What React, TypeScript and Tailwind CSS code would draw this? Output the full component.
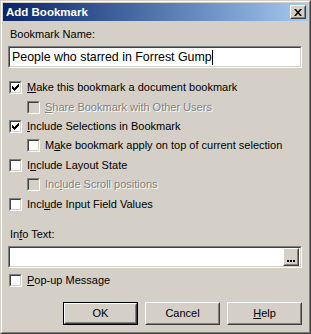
import type { ReactNode } from 'react';

const raisedOuter = "border border-t-white border-l-white border-r-[#404040] border-b-[#404040]";
const raisedInner = "border border-t-[#d4d0c8] border-l-[#d4d0c8] border-r-[#808080] border-b-[#808080]";
const sunkenOuter = "border border-t-[#808080] border-l-[#808080] border-r-white border-b-white";
const sunkenInner = "border border-t-[#404040] border-l-[#404040] border-r-[#d4d0c8] border-b-[#d4d0c8]";

function CheckBox({ checked, disabled }: { checked?: boolean; disabled?: boolean }) {
    return (
        <div className={`${sunkenOuter} w-[13px] h-[13px] shrink-0`}>
            <div className={`${sunkenInner} w-full h-full flex items-center justify-center ${disabled ? 'bg-[#d4d0c8]' : 'bg-white'}`}>
                {checked && (
                    <svg width="7" height="7" viewBox="0 0 7 7">
                        <path d="M0 2h1v1h1v1h1v-1h1v-1h1v-1h1v-1h1v3h-1v1h-1v1h-1v1h-1v1h-1v-1h-1v-1h-1z" fill="#000" />
                    </svg>
                )}
            </div>
        </div>
    );
}

function Row({ checked, disabled, indent, children }: { checked?: boolean; disabled?: boolean; indent?: boolean; children: ReactNode }) {
    return (
        <div className={`flex items-center h-[19.4px] gap-[5px] ${indent ? 'ml-[19px]' : 'ml-px'}`}>
            <CheckBox checked={checked} disabled={disabled} />
            <span className={disabled ? 'text-[#808080] [text-shadow:1px_1px_0_#fff]' : 'text-black'}>{children}</span>
        </div>
    );
}

function Button({ children, isDefault }: { children: ReactNode; isDefault?: boolean }) {
    return (
        <div className={`w-[75px] h-[23px] ${isDefault ? 'border border-black' : ''}`}>
            <div className={`${raisedOuter} w-full h-full`}>
                <div className={`${raisedInner} w-full h-full flex items-center justify-center bg-[#d4d0c8]`}>
                    {children}
                </div>
            </div>
        </div>
    );
}

export default function App() {
    return (
        <div className="w-[311px] h-[334px] font-['Liberation_Sans',Arial,sans-serif] text-[11px] leading-[13px] text-black">
            <div className="w-full h-full border border-t-[#d4d0c8] border-l-[#d4d0c8] border-r-[#404040] border-b-[#404040]">
                <div className="w-full h-full border border-t-white border-l-white border-r-[#808080] border-b-[#808080] bg-[#d4d0c8] p-px flex flex-col">
                    {/* title bar */}
                    <div className="h-[18px] flex items-center justify-between pl-[3px] pr-[2px] bg-gradient-to-r from-[#0a246a] to-[#a6caf0]">
                        <span className="text-white font-bold text-[11.5px]">Add Bookmark</span>
                        <div className={`${raisedOuter} w-[16px] h-[14px]`}>
                            <div className={`${raisedInner} w-full h-full bg-[#d4d0c8] flex items-center justify-center`}>
                                <svg width="8" height="7" viewBox="0 0 8 7">
                                    <path d="M0 0h2l2 2.5 2-2.5h2l-3 3.5 3 3.5h-2l-2-2.5-2 2.5h-2l3-3.5z" fill="#000" />
                                </svg>
                            </div>
                        </div>
                    </div>

                    <div className="flex flex-col pl-[5px] pr-[6px]">
                        <div className="mt-[7px] ml-[2px]">Bookmark Name:</div>
                        <div className={`${sunkenOuter} mt-[5px] h-[22px]`}>
                            <div className={`${sunkenInner} w-full h-full bg-white flex items-center pl-[2px] text-[12.4px]`}>
                                <span>People who starred in Forrest Gump</span>
                                <span className="w-px h-[15px] bg-black"></span>
                            </div>
                        </div>

                        <div className="flex flex-col mt-[10px]">
                            <Row checked><u>M</u>ake this bookmark a document bookmark</Row>
                            <Row indent disabled><u>S</u>hare Bookmark with Other Users</Row>
                            <Row checked><u>I</u>nclude Selections in Bookmark</Row>
                            <Row indent>M<u>a</u>ke bookmark apply on top of current selection</Row>
                            <Row>I<u>n</u>clude Layout State</Row>
                            <Row indent disabled>Inc<u>l</u>ude Scroll positions</Row>
                            <Row>Incl<u>u</u>de Input Field Values</Row>
                        </div>

                        <div className="mt-[14px] ml-[2px]">In<u>f</u>o Text:</div>
                        <div className={`${sunkenOuter} mt-[5px] h-[22px]`}>
                            <div className={`${sunkenInner} w-full h-full bg-white flex items-center justify-end pr-px`}>
                                <div className={`${raisedOuter} w-[16px] h-[18px]`}>
                                    <div className={`${raisedInner} w-full h-full bg-[#d4d0c8] flex items-end justify-center gap-px pb-[2px]`}>
                                        <span className="w-[2px] h-[2px] bg-black"></span>
                                        <span className="w-[2px] h-[2px] bg-black"></span>
                                        <span className="w-[2px] h-[2px] bg-black"></span>
                                    </div>
                                </div>
                            </div>
                        </div>

                        <div className="mt-[3px]">
                            <Row><u>P</u>op-up Message</Row>
                        </div>

                        <div className="flex justify-end gap-[7px] mt-[12px]">
                            <Button isDefault>OK</Button>
                            <Button>Cancel</Button>
                            <Button><u>H</u>elp</Button>
                        </div>
                    </div>
                </div>
            </div>
        </div>
    );
}
